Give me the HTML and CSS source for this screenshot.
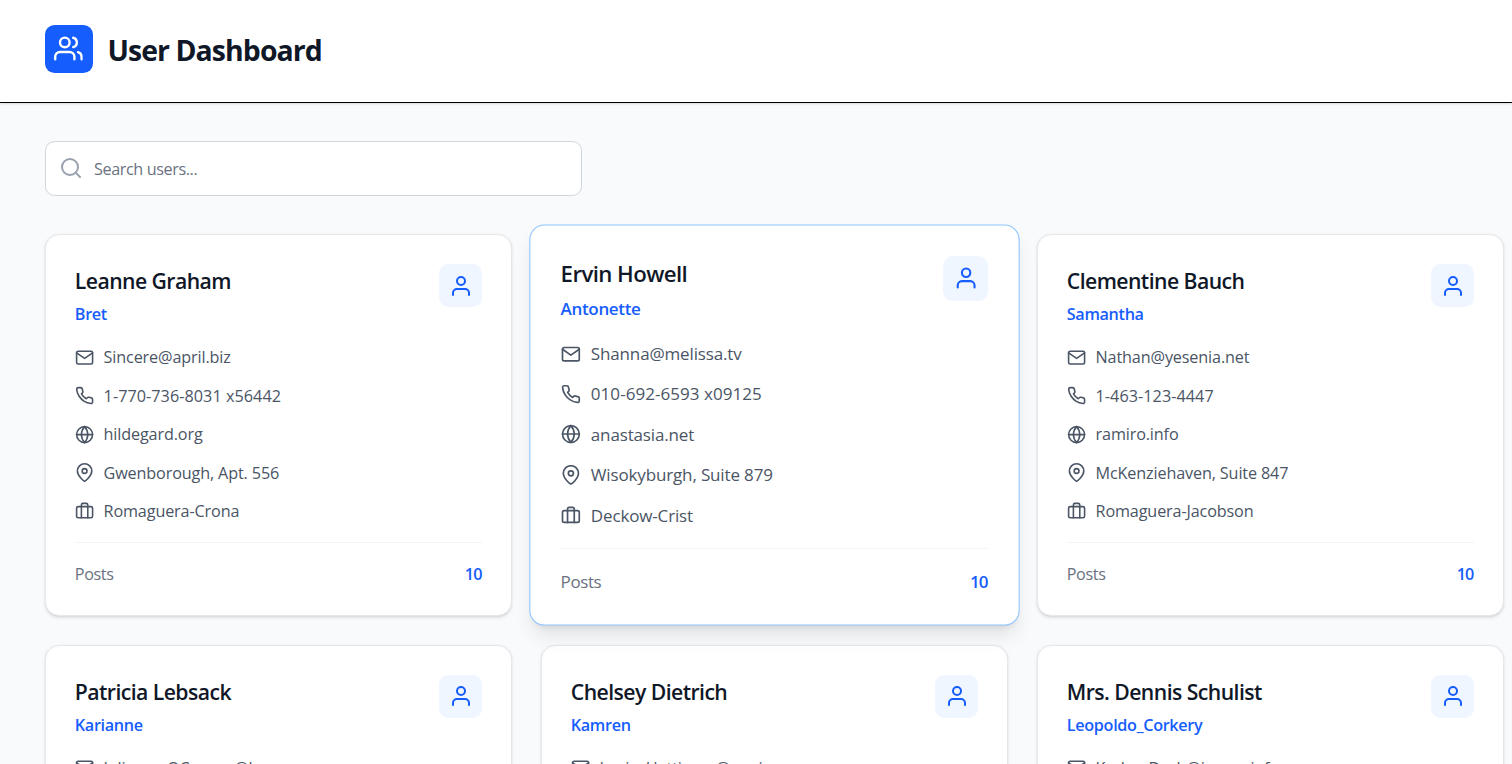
FILE: index.html
```html
<!DOCTYPE html>
<html lang="en">
<head>
<meta charset="utf-8">
<title>User Dashboard</title>
<link rel="stylesheet" href="styles.css">
</head>
<body>
<svg class="sprite" aria-hidden="true">
  <symbol id="users" viewBox="0 0 24 24"><path d="M17 21v-2a4 4 0 0 0-4-4H5a4 4 0 0 0-4 4v2"/><circle cx="9" cy="7" r="4"/><path d="M23 21v-2a4 4 0 0 0-3-3.87M16 3.13a4 4 0 0 1 0 7.75"/></symbol>
  <symbol id="user" viewBox="0 0 24 24"><path d="M20 21v-2a4 4 0 0 0-4-4H8a4 4 0 0 0-4 4v2"/><circle cx="12" cy="7" r="4"/></symbol>
  <symbol id="search" viewBox="0 0 24 24"><circle cx="11" cy="11" r="8"/><path d="M21 21l-4.35-4.35"/></symbol>
  <symbol id="mail" viewBox="0 0 24 24"><path d="M4 4h16c1.1 0 2 .9 2 2v12c0 1.100-.9 2-2 2H4c-1.100 0-2-.9-2-2V6c0-1.100.9-2 2-2z"/><path d="M22 6l-10 7L2 6"/></symbol>
  <symbol id="phone" viewBox="0 0 24 24"><path d="M22 16.920v3a2 2 0 0 1-2.180 2 19.790 19.790 0 0 1-8.630-3.070 19.500 19.500 0 0 1-6-6 19.790 19.790 0 0 1-3.070-8.670A2 2 0 0 1 4.110 2h3a2 2 0 0 1 2 1.720 12.840 12.840 0 0 0 .7 2.810 2 2 0 0 1-.45 2.110L8.090 9.910a16 16 0 0 0 6 6l1.270-1.270a2 2 0 0 1 2.110-.45 12.840 12.840 0 0 0 2.810.7A2 2 0 0 1 22 16.920z"/></symbol>
  <symbol id="globe" viewBox="0 0 24 24"><circle cx="12" cy="12" r="10"/><path d="M2 12h20"/><path d="M12 2a15.300 15.300 0 0 1 4 10 15.300 15.300 0 0 1-4 10 15.300 15.300 0 0 1-4-10 15.300 15.300 0 0 1 4-10z"/></symbol>
  <symbol id="pin" viewBox="0 0 24 24"><path d="M21 10c0 7-9 13-9 13s-9-6-9-13a9 9 0 0 1 18 0z"/><circle cx="12" cy="10" r="3"/></symbol>
  <symbol id="briefcase" viewBox="0 0 24 24"><rect x="2" y="7" width="20" height="14" rx="2"/><path d="M16 21V5a2 2 0 0 0-2-2h-4a2 2 0 0 0-2 2v16"/></symbol>
</svg>

<header class="header">
  <div class="logo"><svg class="icon"><use href="#users"/></svg></div>
  <h1 class="title">User Dashboard</h1>
</header>

<main class="main">
  <label class="search"><svg class="icon"><use href="#search"/></svg><span class="placeholder">Search users...</span></label>

  <div class="grid">
    <article class="card">
      <div class="card-head">
        <div><h2 class="name">Leanne Graham</h2><p class="username">Bret</p></div>
        <div class="avatar"><svg class="icon"><use href="#user"/></svg></div>
      </div>
      <ul class="details">
        <li><svg class="icon"><use href="#mail"/></svg><span>Sincere@april.biz</span></li>
        <li><svg class="icon"><use href="#phone"/></svg><span class="num">1-770-736-8031 x56442</span></li>
        <li><svg class="icon"><use href="#globe"/></svg><span>hildegard.org</span></li>
        <li><svg class="icon"><use href="#pin"/></svg><span>Gwenborough, Apt. 556</span></li>
        <li><svg class="icon"><use href="#briefcase"/></svg><span>Romaguera-Crona</span></li>
      </ul>
      <div class="card-foot"><span>Posts</span><span class="count">10</span></div>
    </article>

    <article class="card active">
      <div class="card-head">
        <div><h2 class="name">Ervin Howell</h2><p class="username">Antonette</p></div>
        <div class="avatar"><svg class="icon"><use href="#user"/></svg></div>
      </div>
      <ul class="details">
        <li><svg class="icon"><use href="#mail"/></svg><span>Shanna@melissa.tv</span></li>
        <li><svg class="icon"><use href="#phone"/></svg><span class="num">010-692-6593 x09125</span></li>
        <li><svg class="icon"><use href="#globe"/></svg><span>anastasia.net</span></li>
        <li><svg class="icon"><use href="#pin"/></svg><span>Wisokyburgh, Suite 879</span></li>
        <li><svg class="icon"><use href="#briefcase"/></svg><span>Deckow-Crist</span></li>
      </ul>
      <div class="card-foot"><span>Posts</span><span class="count">10</span></div>
    </article>

    <article class="card">
      <div class="card-head">
        <div><h2 class="name">Clementine Bauch</h2><p class="username">Samantha</p></div>
        <div class="avatar"><svg class="icon"><use href="#user"/></svg></div>
      </div>
      <ul class="details">
        <li><svg class="icon"><use href="#mail"/></svg><span>Nathan@yesenia.net</span></li>
        <li><svg class="icon"><use href="#phone"/></svg><span class="num">1-463-123-4447</span></li>
        <li><svg class="icon"><use href="#globe"/></svg><span>ramiro.info</span></li>
        <li><svg class="icon"><use href="#pin"/></svg><span>McKenziehaven, Suite 847</span></li>
        <li><svg class="icon"><use href="#briefcase"/></svg><span>Romaguera-Jacobson</span></li>
      </ul>
      <div class="card-foot"><span>Posts</span><span class="count">10</span></div>
    </article>

    <article class="card">
      <div class="card-head">
        <div><h2 class="name">Patricia Lebsack</h2><p class="username">Karianne</p></div>
        <div class="avatar"><svg class="icon"><use href="#user"/></svg></div>
      </div>
      <ul class="details">
        <li><svg class="icon"><use href="#mail"/></svg><span>Julianne.OConner@kory.org</span></li>
      </ul>
    </article>

    <article class="card">
      <div class="card-head">
        <div><h2 class="name">Chelsey Dietrich</h2><p class="username">Kamren</p></div>
        <div class="avatar"><svg class="icon"><use href="#user"/></svg></div>
      </div>
      <ul class="details">
        <li><svg class="icon"><use href="#mail"/></svg><span>Lucio_Hettinger@annie.ca</span></li>
      </ul>
    </article>

    <article class="card">
      <div class="card-head">
        <div><h2 class="name">Mrs. Dennis Schulist</h2><p class="username">Leopoldo_Corkery</p></div>
        <div class="avatar"><svg class="icon"><use href="#user"/></svg></div>
      </div>
      <ul class="details">
        <li><svg class="icon"><use href="#mail"/></svg><span>Karley_Dach@jasper.info</span></li>
      </ul>
    </article>
  </div>
</main>
</body>
</html>
```

FILE: styles.css
```css
* { box-sizing: border-box; margin: 0; padding: 0; }
html, body { height: 764px; overflow: hidden; }
body {
  background: #f9fafb;
  font-family: "Segoe UI", "Open Sans", "Noto Sans", sans-serif;
  font-size: 16.2px;
  font-weight: 400;
  line-height: 24px;
  letter-spacing: -.14px;
  color: #101828;
}
.sprite { position: absolute; width: 0; height: 0; }
.icon {
  display: block;
  flex: none;
  width: 24px;
  height: 24px;
  fill: none;
  stroke: currentColor;
  stroke-width: 2;
  stroke-linecap: round;
  stroke-linejoin: round;
}
.header {
  display: flex;
  align-items: flex-start;
  gap: 14.4px;
  height: 103px;
  padding: 25px 45px 0;
  background: #fff;
  border-bottom: 1px solid #000;
  box-shadow: 0 1px 3px rgba(0, 0, 0, .1), 0 1px 2px -1px rgba(0, 0, 0, .1);
}
.logo {
  width: 48px;
  height: 48px;
  padding: 9px;
  border-radius: 9.6px;
  background: #155dfc;
  color: #fff;
}
.logo .icon { width: 28.8px; height: 28.8px; }
.title { font-size: 28.4px; font-weight: 700; line-height: 51px; letter-spacing: -.9px; }

.main { padding: 38px 8px 0 45px; }
.search {
  display: flex;
  align-items: center;
  gap: 11px;
  width: 537px;
  height: 55px;
  margin-bottom: 38.4px;
  padding-left: 13px;
  border: 1px solid #d1d5dc;
  border-radius: 9.6px;
  background: #fff;
  color: #99a1af;
}
.search .icon { margin-bottom: 2px; }
.placeholder { color: #6a7282; letter-spacing: -.4px; }

.grid {
  display: grid;
  grid-template-columns: repeat(3, 467.2px);
  grid-auto-rows: 381.6px;
  gap: 28.8px;
}
.card {
  padding: 28.8px;
  border: 1px solid #e5e7eb;
  border-radius: 14.4px;
  background: #fff;
  box-shadow: 0 1.2px 3.6px rgba(0, 0, 0, .1), 0 1.2px 2.4px -1.2px rgba(0, 0, 0, .1);
}
.card.active {
  transform: scale(1.05);
  border-color: #8ec5ff;
  box-shadow: 0 12px 18px -3.6px rgba(0, 0, 0, .1), 0 4.8px 7.2px -4.8px rgba(0, 0, 0, .1);
}
.card-head {
  display: flex;
  justify-content: space-between;
  align-items: flex-start;
  margin-bottom: 19.3px;
}
.name { font-size: 21.2px; font-weight: 600; line-height: 34.4px; margin-bottom: 3.6px; letter-spacing: -.56px; }
.username { font-weight: 600; color: #155dfc; letter-spacing: -.32px; }
.avatar {
  padding: 9.6px;
  border-radius: 9.6px;
  background: #eff6ff;
  color: #155dfc;
}
.details {
  display: grid;
  gap: 14.4px;
  list-style: none;
  color: #4a5565;
}
.details li { display: flex; align-items: center; gap: 9.6px; height: 24px; }
.details .icon { width: 19.2px; height: 19.2px; }
.num { letter-spacing: .05px; }
.card-foot {
  display: flex;
  justify-content: space-between;
  margin-top: 18.9px;
  padding-top: 19.2px;
  border-top: 1px solid #f3f4f6;
  color: #6a7282;
  letter-spacing: -.4px;
}
.count { padding-right: .9px; font-weight: 600; color: #155dfc; letter-spacing: -.9px; }
```
